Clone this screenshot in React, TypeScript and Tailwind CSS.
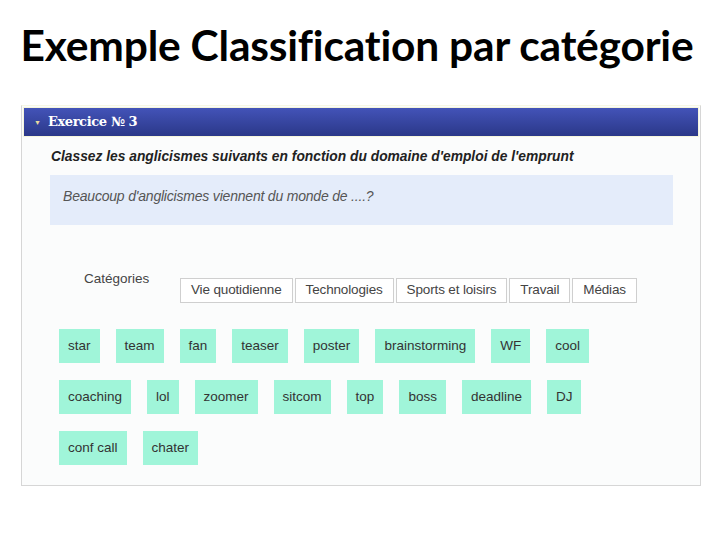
const rows = [
	["star", "team", "fan", "teaser", "poster", "brainstorming", "WF", "cool"],
	["coaching", "lol", "zoomer", "sitcom", "top", "boss", "deadline", "DJ"],
	["conf call", "chater"],
];

const categories = ["Vie quotidienne", "Technologies", "Sports et loisirs", "Travail", "Médias"];

export default function App() {
	return (
		<div className="w-[720px] h-[540px] bg-white flex flex-col items-center overflow-hidden">
			<h1 className="mt-[19px] -ml-[6px] text-[42.5px] leading-[52px] font-bold text-black font-['Lato',sans-serif] tracking-[-0.2px]">
				Exemple Classification par catégorie
			</h1>
			<div className="mt-[34px] w-[680px] ml-[2px] border border-[#d6d6d6] border-t-[#f6f7e4] bg-[#fbfcfc] flex flex-col">
				<div className="mx-[1px] mt-[1px] h-[30px] bg-gradient-to-b from-[#4353b8] to-[#2b3889] border border-[#f5f5dc] flex items-center pl-[10px] gap-[7px]">
					<span className="text-[#e8d9a0] text-[7px] leading-none">▼</span>
					<span className="text-white font-bold text-[13px] font-['DejaVu_Serif',serif] tracking-[-0.4px]">
						Exercice № 3
					</span>
				</div>
				<div className="pl-[28px] pr-[27px] pt-[11px] pb-[20px] flex flex-col font-['Liberation_Sans',Arial,sans-serif]">
					<p className="pl-[1px] text-[13.8px] font-bold italic text-[#222] leading-[18px]">
						Classez les anglicismes suivants en fonction du domaine d'emploi de l'emprunt
					</p>
					<div className="mt-[9px] h-[50px] bg-[#e4ecfa] flex items-center pl-[13px]">
						<span className="italic text-[14px] text-[#555] tracking-[-0.2px] -mt-[8px]">
							Beaucoup d'anglicismes viennent du monde de ....?
						</span>
					</div>
					<div className="mt-[53px] flex items-start">
						<span className="ml-[34px] w-[96px] -mt-[9px] text-[13.5px] text-[#444]">Catégories</span>
						<div className="flex gap-[2px]">
							{categories.map((c) => (
								<div
									key={c}
									className="h-[25px] px-[10px] border border-[#cfcfcf] bg-white flex items-center text-[13.5px] text-[#444] tracking-[-0.15px]"
								>
									{c}
								</div>
							))}
						</div>
					</div>
					<div className="mt-[26px] ml-[9px] flex flex-col gap-[17px]">
						{rows.map((r, i) => (
							<div key={i} className="flex gap-[16px]">
								{r.map((w) => (
									<div
										key={w}
										className="h-[34px] px-[9px] bg-[#a0f5d9] flex items-center text-[13.5px] text-[#333]"
									>
										{w}
									</div>
								))}
							</div>
						))}
					</div>
				</div>
			</div>
		</div>
	);
}
